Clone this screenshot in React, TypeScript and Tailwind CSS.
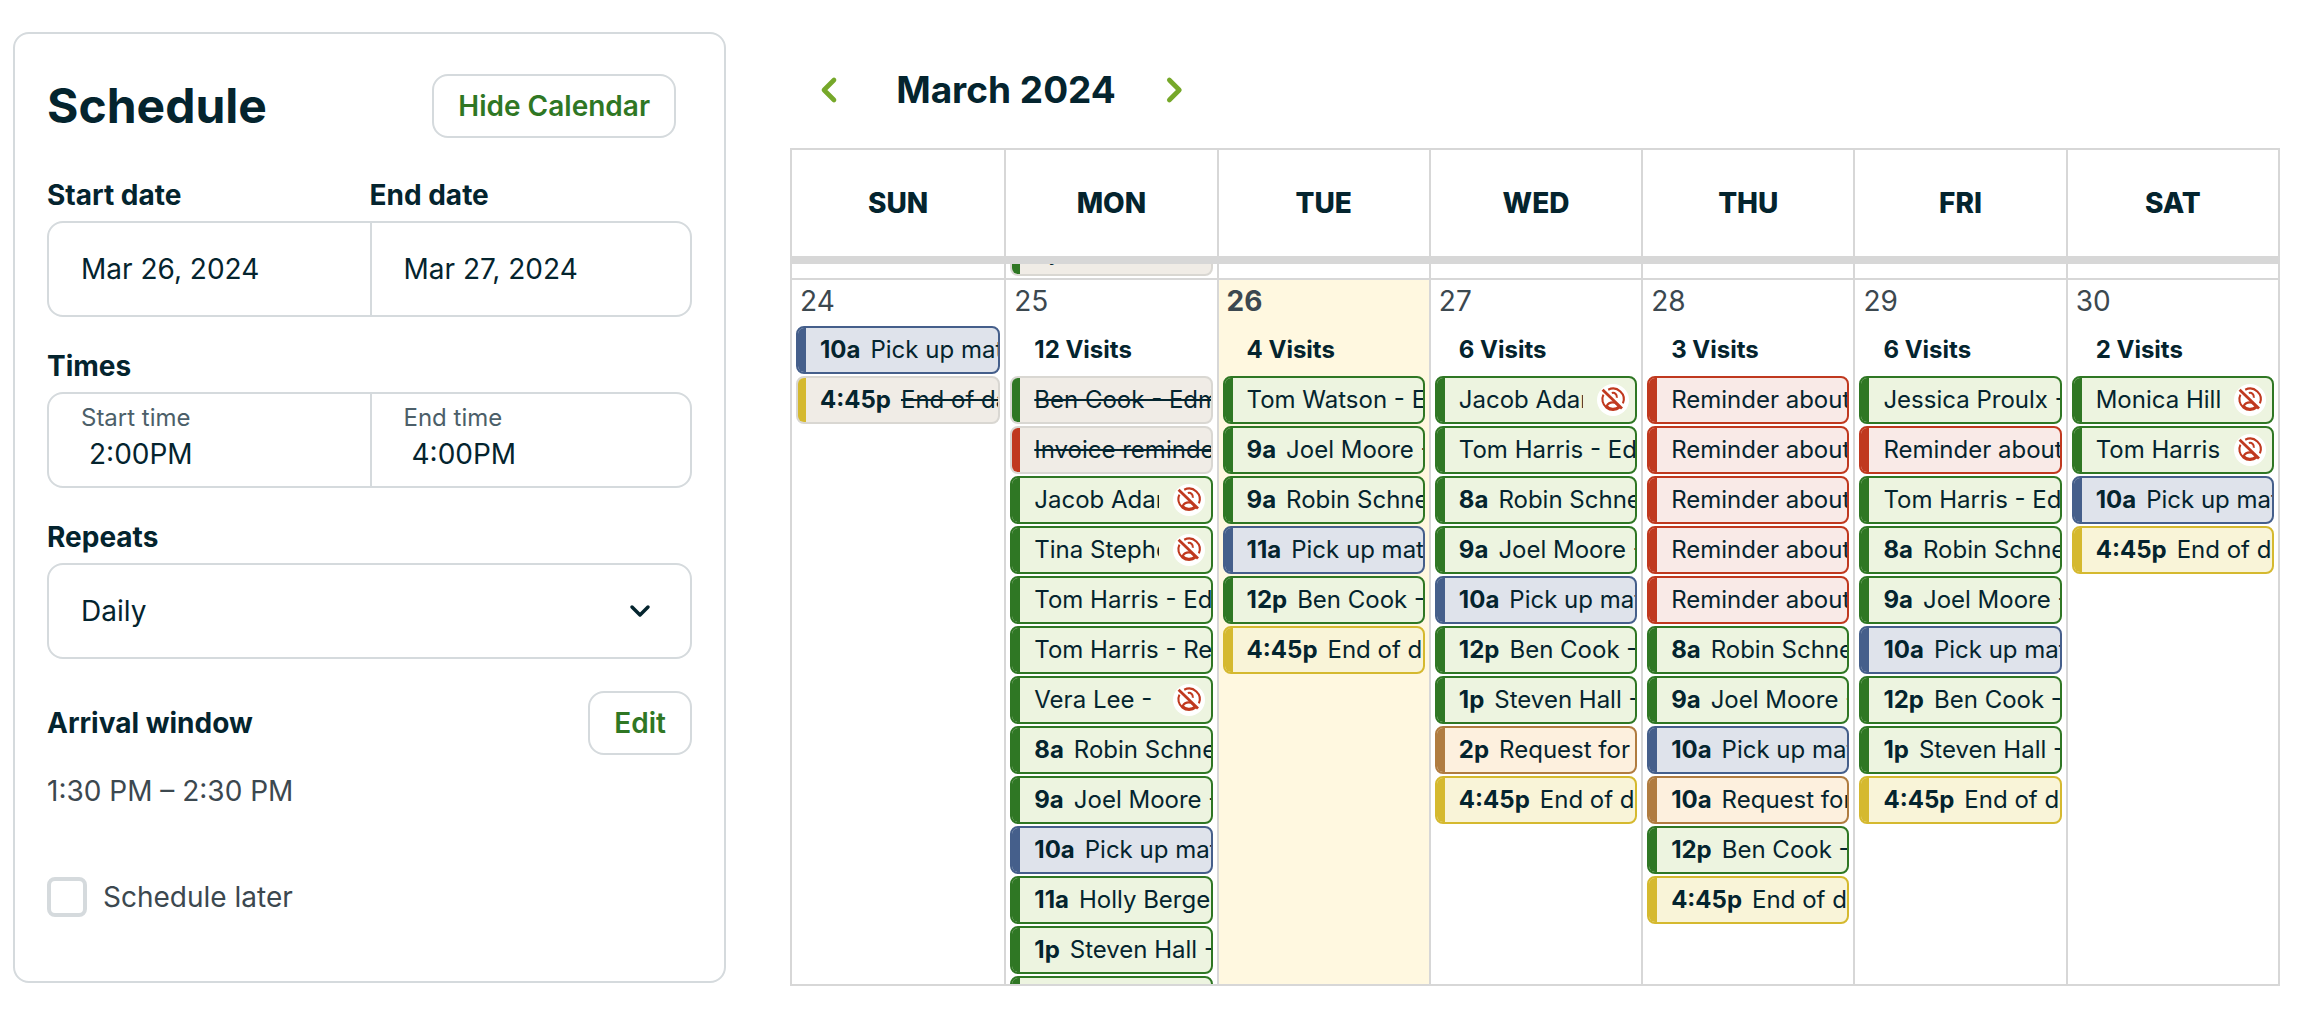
import React from "react";

type Tone = "green" | "blue" | "red" | "yellow" | "orange";

type Visit = {
  tone: Tone;
  title: string;
  time?: string;
  done?: boolean;
  unassigned?: boolean;
};

type Day = { date: number; visits?: number; today?: boolean; items: Visit[] };

const tones: Record<Tone, { box: string; bar: string }> = {
  green: { box: "border-[#2f7724] bg-[#edf4e0]", bar: "bg-[#2f7724]" },
  blue: { box: "border-[#455f8b] bg-[#dfe3eb]", bar: "bg-[#455f8b]" },
  red: { box: "border-[#c0391f] bg-[#f9eae7]", bar: "bg-[#c0391f]" },
  yellow: { box: "border-[#d5b92f] bg-[#f9f4d8]", bar: "bg-[#d5b92f]" },
  orange: { box: "border-[#b07c40] bg-[#fdf0de]", bar: "bg-[#b07c40]" },
};

const robin: Visit = { tone: "green", time: "8a", title: "Robin Schneider - Edmonton" };
const joel: Visit = { tone: "green", time: "9a", title: "Joel Moore - Edmonton" };
const pickUp: Visit = { tone: "blue", time: "10a", title: "Pick up materials" };
const ben: Visit = { tone: "green", time: "12p", title: "Ben Cook - Edmonton" };
const steven: Visit = { tone: "green", time: "1p", title: "Steven Hall - Edmonton" };
const endOfDay: Visit = { tone: "yellow", time: "4:45p", title: "End of day wrap up" };
const harris: Visit = { tone: "green", title: "Tom Harris - Edmonton" };
const reminder: Visit = { tone: "red", title: "Reminder about invoice" };
const jacob: Visit = { tone: "green", title: "Jacob Adams - Edmonton", unassigned: true };

const days: Day[] = [
  { date: 24, items: [pickUp, { ...endOfDay, done: true }] },
  {
    date: 25,
    visits: 12,
    items: [
      { tone: "green", title: "Ben Cook - Edmonton", done: true },
      { tone: "red", title: "Invoice reminder", done: true },
      jacob,
      { tone: "green", title: "Tina Stephens", unassigned: true },
      harris,
      { tone: "green", title: "Tom Harris - Repair" },
      { tone: "green", title: "Vera Lee - Edmonton", unassigned: true },
      robin,
      joel,
      pickUp,
      { tone: "green", time: "11a", title: "Holly Berger - Edmonton" },
      steven,
      { tone: "green", time: "2p", title: "Robin Schneider" },
    ],
  },
  {
    date: 26,
    visits: 4,
    today: true,
    items: [
      { tone: "green", title: "Tom Watson - Edmonton" },
      joel,
      { ...robin, time: "9a" },
      { ...pickUp, time: "11a" },
      ben,
      endOfDay,
    ],
  },
  {
    date: 27,
    visits: 6,
    items: [
      jacob,
      harris,
      robin,
      joel,
      pickUp,
      ben,
      steven,
      { tone: "orange", time: "2p", title: "Request for quote" },
      endOfDay,
    ],
  },
  {
    date: 28,
    visits: 3,
    items: [
      reminder,
      reminder,
      reminder,
      reminder,
      reminder,
      robin,
      joel,
      pickUp,
      { tone: "orange", time: "10a", title: "Request for quote" },
      ben,
      endOfDay,
    ],
  },
  {
    date: 29,
    visits: 6,
    items: [
      { tone: "green", title: "Jessica Proulx - Edmonton" },
      reminder,
      harris,
      robin,
      joel,
      pickUp,
      ben,
      steven,
      endOfDay,
    ],
  },
  {
    date: 30,
    visits: 2,
    items: [
      { tone: "green", title: "Monica Hill - Edmonton", unassigned: true },
      { ...harris, unassigned: true },
      pickUp,
      endOfDay,
    ],
  },
];

const weekdays = ["SUN", "MON", "TUE", "WED", "THU", "FRI", "SAT"];

function UnassignedIcon() {
  return (
    <svg viewBox="0 0 32 32" className="size-8" fill="none" stroke="#c0391f" strokeWidth="2.1">
      <circle cx="16" cy="16" r="16" fill="#fff" stroke="none" />
      <path d="M11.2 5.7A10.7 10.7 0 0 1 25.9 19.4" />
      <path d="M6.4 10.6A10.7 10.7 0 0 0 22.8 23.5" />
      <path d="M14.8 9A4 4 0 0 1 19.8 13.8" />
      <path d="M9.6 22C11.5 18.8 14.6 17.9 18 18.7L22 22.6C18.5 25.8 12.5 25.6 9.6 22Z" />
      <path d="M5.6 5.8L25 24.4" strokeWidth="2.8" />
    </svg>
  );
}

function Chevron({ d, className }: { d: string; className: string }) {
  return (
    <svg
      viewBox="0 0 24 24"
      className={className}
      fill="none"
      stroke="currentColor"
      strokeWidth="3.5"
      strokeLinecap="round"
      strokeLinejoin="round"
      aria-hidden="true"
    >
      <path d={d} />
    </svg>
  );
}

function VisitCard({ visit }: { visit: Visit }) {
  const tone = tones[visit.tone];
  return (
    <button
      type="button"
      className={`flex h-12 w-full shrink-0 items-center overflow-hidden rounded-lg border-2 text-left text-2xl ${
        visit.done ? "border-[#d9d7d2] bg-[#f0ece6]" : tone.box
      }`}
    >
      <span className={`w-2 shrink-0 self-stretch ${tone.bar}`} />
      <span className="ml-3.5 min-w-0 flex-1 overflow-hidden whitespace-nowrap">
        {visit.time && <span className="mr-2.5 font-bold">{visit.time}</span>}
        <span className={visit.done ? "line-through" : ""}>{visit.title}</span>
      </span>
      {visit.unassigned && (
        <span className="mr-1.5 ml-3.5 shrink-0">
          <UnassignedIcon />
        </span>
      )}
    </button>
  );
}

function DayCell({ day }: { day: Day }) {
  return (
    <div className="h-[704px] overflow-hidden px-1 pt-1">
      <div className={`pl-1 text-[28px] leading-[34px] text-[#3c484f] ${day.today ? "font-bold" : ""}`}>
        {day.date}
      </div>
      <div className="mt-2 flex flex-col gap-0.5">
        {day.visits && (
          <div className="flex h-12 items-center pl-6 text-2xl font-bold">{day.visits} Visits</div>
        )}
        {day.items.map((visit, i) => (
          <VisitCard key={i} visit={visit} />
        ))}
      </div>
    </div>
  );
}

function Calendar() {
  return (
    <section className="min-w-0 flex-1">
      <div className="flex h-[116px] items-center pl-4 text-[#76a82a]">
        <button type="button" aria-label="Previous month" className="p-2">
          <Chevron d="M15 4.5L7.5 12L15 19.5" className="size-8" />
        </button>
        <h2 className="w-[296px] pl-2 text-center text-[37px] leading-12 font-bold text-[#04242e]">March 2024</h2>
        <button type="button" aria-label="Next month" className="p-2">
          <Chevron d="M8.5 4.5L16 12L8.5 19.5" className="size-8" />
        </button>
      </div>
      <table className="w-full table-fixed border-separate border-spacing-0 border-2 border-[#d7d7d7]">
        <thead>
          <tr>
            {weekdays.map((name) => (
              <th
                key={name}
                scope="col"
                className="h-[114px] border-b-8 border-l-2 border-[#d7d7d7] p-0 text-[28px] font-extrabold first:border-l-0"
              >
                {name}
              </th>
            ))}
          </tr>
        </thead>
        <tbody>
          <tr>
            {weekdays.map((name) => (
              <td key={name} className="border-b-2 border-l-2 border-[#d7d7d7] p-0 first:border-l-0">
                <div className="flex h-3.5 flex-col justify-end overflow-hidden px-1 pb-0.5">
                  {name === "MON" && <VisitCard visit={{ tone: "green", title: "Tyler Reed", done: true }} />}
                </div>
              </td>
            ))}
          </tr>
          <tr>
            {days.map((day) => (
              <td
                key={day.date}
                className={`border-l-2 border-[#d7d7d7] p-0 align-top first:border-l-0 ${day.today ? "bg-[#fff8e0]" : ""}`}
              >
                <DayCell day={day} />
              </td>
            ))}
          </tr>
        </tbody>
      </table>
    </section>
  );
}

function SchedulePanel() {
  return (
    <section className="w-[713px] shrink-0 rounded-2xl border-2 border-[#d5dadd] px-8 pt-10 pb-16">
      <div className="flex items-center justify-between pr-4">
        <h1 className="text-5xl leading-16 font-bold">Schedule</h1>
        <button
          type="button"
          className="h-16 rounded-2xl border-2 border-[#d5dadd] px-6 text-[28px] font-semibold text-[#2f7724]"
        >
          Hide Calendar
        </button>
      </div>

      <div className="mt-10 grid grid-cols-2 text-[28px] leading-[35px] font-bold">
        <label htmlFor="start-date">Start date</label>
        <label htmlFor="end-date">End date</label>
      </div>
      <div className="mt-2 grid h-24 grid-cols-2 rounded-2xl border-2 border-[#d5dadd] text-[28px]">
        <input id="start-date" type="text" defaultValue="Mar 26, 2024" className="min-w-0 px-8 outline-none" />
        <input
          id="end-date"
          type="text"
          defaultValue="Mar 27, 2024"
          className="min-w-0 border-l-2 border-[#d5dadd] px-8 outline-none"
        />
      </div>

      <h3 className="mt-8 text-[28px] leading-[35px] font-bold">Times</h3>
      <div className="mt-2 grid h-24 grid-cols-2 rounded-2xl border-2 border-[#d5dadd] text-[28px]">
        <div className="flex min-w-0 flex-col px-8 pt-2">
          <label htmlFor="start-time" className="text-2xl text-[#4c5f69]">
            Start time
          </label>
          <input id="start-time" type="text" defaultValue="2:00PM" className="h-10 min-w-0 pl-2 outline-none" />
        </div>
        <div className="flex min-w-0 flex-col border-l-2 border-[#d5dadd] px-8 pt-2">
          <label htmlFor="end-time" className="text-2xl text-[#4c5f69]">
            End time
          </label>
          <input id="end-time" type="text" defaultValue="4:00PM" className="h-10 min-w-0 pl-2 outline-none" />
        </div>
      </div>

      <label htmlFor="repeats" className="mt-8 block text-[28px] leading-[35px] font-bold">
        Repeats
      </label>
      <div className="relative mt-2">
        <select
          id="repeats"
          defaultValue="Daily"
          className="block h-24 w-full appearance-none rounded-2xl border-2 border-[#d5dadd] px-8 text-[28px] outline-none"
        >
          <option>Daily</option>
          <option>Weekly</option>
          <option>Monthly</option>
        </select>
        <Chevron
          d="M4 8L12 16L20 8"
          className="pointer-events-none absolute top-9 right-10 size-6"
        />
      </div>

      <div className="mt-8 flex items-center justify-between">
        <h3 className="text-[28px] leading-[35px] font-bold">Arrival window</h3>
        <button
          type="button"
          className="h-16 rounded-2xl border-2 border-[#d5dadd] px-6 text-[28px] font-semibold text-[#2f7724]"
        >
          Edit
        </button>
      </div>
      <p className="mt-4 text-[28px] leading-10 text-[#3c484f]">1:30 PM – 2:30 PM</p>

      <label className="mt-[66px] flex items-center gap-4 text-[28px] leading-10 text-[#3c484f]">
        <input
          type="checkbox"
          className="size-10 shrink-0 appearance-none rounded-lg border-4 border-[#d5dadd] checked:bg-[#2f7724]"
        />
        Schedule later
      </label>
    </section>
  );
}

export default function App() {
  return (
    <main className="flex items-start gap-16 bg-white pt-8 pr-5 pb-6 pl-[13px] font-[Inter,'Liberation_Sans',sans-serif] text-[#04242e]">
      <SchedulePanel />
      <Calendar />
    </main>
  );
}
